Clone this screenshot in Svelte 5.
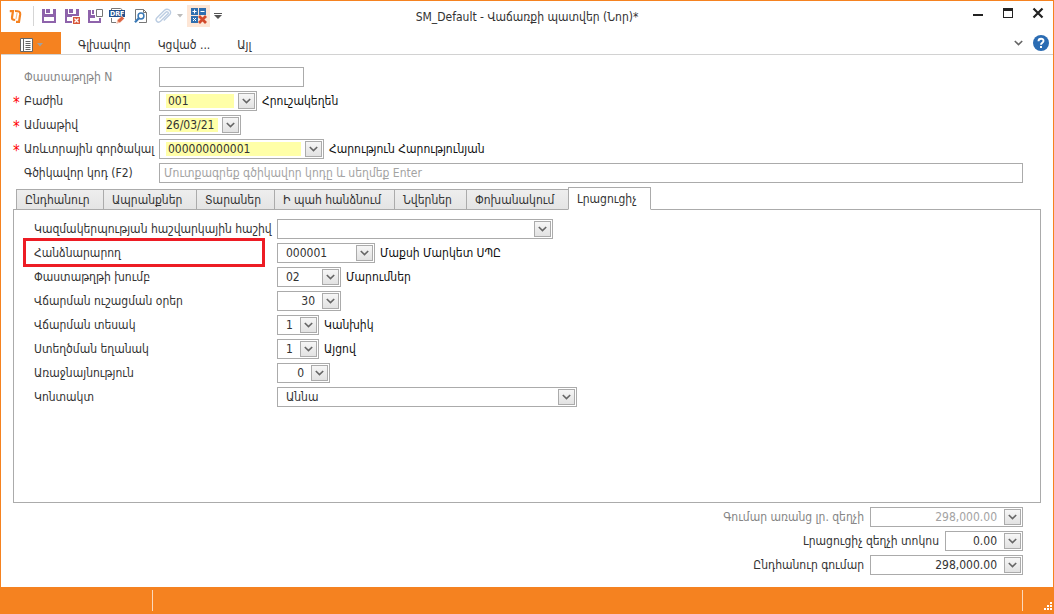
<script>
    let activeTab = $state(6);

    const tabs = [
        { title: 'Ընդհանուր', width: 88 },
        { title: 'Ապրանքներ', width: 94 },
        { title: 'Տարաներ', width: 79 },
        { title: 'Ի պահ հանձնում', width: 121 },
        { title: 'Նվերներ', width: 73 },
        { title: 'Փոխանակում', width: 103 },
        { title: 'Լրացուցիչ', width: 83 }
    ];

    // Fields of the document header
    const headerFields = [
        { id: 'docnum', label: 'Փաստաթղթի N', kind: 'text', value: '', width: 145, muted: true },
        { id: 'branch', label: 'Բաժին', kind: 'list', value: '001', width: 98, required: true, note: 'Հրուշակեղեն' },
        { id: 'date', label: 'Ամսաթիվ', kind: 'edit', value: '26/03/21', width: 82, required: true, tight: true },
        { id: 'agent', label: 'Առևտրային գործակալ', kind: 'list', value: '000000000001', width: 165, required: true, note: 'Հարություն Հարությունյան' },
        { id: 'barcode', label: 'Գծիկավոր կոդ (F2)', kind: 'text', value: '', placeholder: 'Մուտքագրեք գծիկավոր կոդը և սեղմեք Enter' }
    ];

    // Fields of the last tab
    const extraFields = [
        { id: 'account', label: 'Կազմակերպության հաշվարկային հաշիվ', kind: 'list', value: '', width: 276 },
        { id: 'client', label: 'Հանձնարարող', kind: 'list', value: '000001', width: 98, note: 'Մաքսի Մարկետ ՍՊԸ', marked: true },
        { id: 'group', label: 'Փաստաթղթի խումբ', kind: 'list', value: '02', width: 64, note: 'Մարումներ' },
        { id: 'delay', label: 'Վճարման ուշացման օրեր', kind: 'edit', value: '30', width: 64, right: true },
        { id: 'paytype', label: 'Վճարման տեսակ', kind: 'list', value: '1', width: 42, note: 'Կանխիկ' },
        { id: 'source', label: 'Ստեղծման եղանակ', kind: 'list', value: '1', width: 42, note: 'Այցով' },
        { id: 'priority', label: 'Առաջնայնություն', kind: 'edit', value: '0', width: 53, right: true },
        { id: 'contact', label: 'Կոնտակտ', kind: 'list', value: 'Աննա', width: 300 }
    ];

    const totals = [
        { id: 'net', label: 'Գումար առանց լր. զեղչի', kind: 'edit', value: '298,000.00', width: 153, right: true, muted: true },
        { id: 'discount', label: 'Լրացուցիչ զեղչի տոկոս', kind: 'edit', value: '0.00', width: 78, right: true },
        { id: 'total', label: 'Ընդհանուր գումար', kind: 'edit', value: '298,000.00', width: 153, right: true }
    ];
</script>

{#snippet chevron()}
    <svg width="9" height="6" viewBox="0 0 9 6"><path d="M.8 1l3.700 3.600L8.200 1" fill="none" stroke="#666" stroke-width="1.600" /></svg>
{/snippet}

{#snippet floppy()}
    <path d="M1 1h14v14H1z" fill="#8e63ab" />
    <path d="M4 1h8v5H4z" fill="#fff" />
    <path d="M5 1h4v4H5z" fill="#8e63ab" />
    <path d="M3 9h10v4H3z" fill="#fff" />
{/snippet}

{#snippet field(f)}
    {#if f.kind === 'text'}
        <input
            class="box plain"
            class:wide={!f.width}
            id={f.id}
            type="text"
            value={f.value}
            placeholder={f.placeholder}
            style:width={f.width ? `${f.width}px` : null}
        />
    {:else}
        <span class="box combo" class:required={f.required} class:tight={f.tight} class:right={f.right} class:muted={f.muted} style:width="{f.width}px">
            {#if f.kind === 'list'}
                <select id={f.id}><option>{f.value}</option></select>
                <span class="drop">{@render chevron()}</span>
            {:else}
                <input id={f.id} type="text" value={f.value} />
                <button class="drop" type="button" aria-label={f.label}>{@render chevron()}</button>
            {/if}
        </span>
    {/if}
    {#if f.note}<span class="note">{f.note}</span>{/if}
{/snippet}

<div class="window">
    <header class="titlebar">
        <div class="quick">
            <svg class="logo" width="14" height="16" viewBox="0 0 14 16">
                <path d="M.8 3.200H4L3 9.500c-.2 1.800.8 2.300 3.200 2.500" fill="none" stroke="#f58220" stroke-width="2.200" />
                <path d="M6 3c3.800 0 5.500.6 5.200 3.200L10 13.800H7" fill="none" stroke="#f58220" stroke-width="2.200" />
                <path d="M8 5L7 11" stroke="#fbc08c" stroke-width="1.200" />
            </svg>
            <span class="divider"></span>
            <button class="tool" aria-label="Save">
                <svg width="16" height="16" viewBox="0 0 16 16">{@render floppy()}</svg>
            </button>
            <button class="tool" aria-label="Save and close">
                <svg width="16" height="16" viewBox="0 0 16 16">
                    {@render floppy()}
                    <path d="M8 8h8v8H8z" fill="#fff" />
                    <path d="M9 9h7v7H9z" fill="#d9583b" />
                    <path d="M10.500 10.500l4 4m0-4l-4 4" stroke="#fff" stroke-width="1.300" />
                </svg>
            </button>
            <button class="tool" aria-label="Save and new">
                <svg width="16" height="16" viewBox="0 0 16 16">
                    <path d="M1 2h13v13H1z" fill="#8e63ab" />
                    <path d="M4 2h6v5H4zM3 10h9v3H3z" fill="#fff" />
                    <path d="M5 2h2v4H5z" fill="#8e63ab" />
                    <path d="M8 0h8v10H8z" fill="#fff" />
                    <path d="M9.500 1.500h6v7h-6z" fill="#fff" stroke="#777" />
                </svg>
            </button>
            <button class="tool" aria-label="Draft">
                <svg width="17" height="16" viewBox="0 0 17 16">
                    <path d="M2.500 10v4.500H7M2.500 2V.5h9l2 1.500" fill="none" stroke="#777" />
                    <path d="M0 2h16v7H0z" fill="#1f4e8c" />
                    <text x="1" y="8" font-size="7" font-weight="bold" fill="#fff">DRF</text>
                    <path d="M7.500 15.500l.8-3.500 4.500-4 2.700 2.500-4.500 4.200z" fill="#dc6543" stroke="#fff" stroke-width=".5" />
                    <path d="M7.500 15.500l.8-3 2.300 2.300z" fill="#f3c3ae" />
                </svg>
            </button>
            <button class="tool" aria-label="Preview">
                <svg width="16" height="16" viewBox="0 0 16 16">
                    <path d="M2.500 12V1.500h8l3 3v10H6" fill="#fff" stroke="#777" />
                    <path d="M10.500 1.500v3h3" fill="none" stroke="#777" />
                    <circle cx="8" cy="8" r="2.900" fill="#fff" stroke="#3a78b5" stroke-width="1.500" />
                    <path d="M5.800 10.300L2 14.300" stroke="#3a78b5" stroke-width="2.200" />
                </svg>
            </button>
            <button class="tool" aria-label="Attach">
                <svg width="17" height="16" viewBox="0 0 17 16">
                    <path d="M4.500 10.500l6.300-6.300c1.400-1.400 3.300.5 2 1.900l-7.300 7.200C3 15.500-.5 12.500 2 9.800l7.500-7.500C12.500-.5 17.500 3 14.800 6.500l-6 6" fill="none" stroke="#bccde2" stroke-width="1.400" />
                </svg>
            </button>
            <svg class="caret" width="6" height="4" viewBox="0 0 6 4"><path d="M0 0h6L3 3.500z" fill="#bbb" /></svg>
            <button class="tool lit" aria-label="Recalculate">
                <svg width="17" height="17" viewBox="0 0 17 17">
                    <path d="M1 1h7v7H1zM9 1h7v7H9zM1 9h7v7H1z" fill="#2f6fb0" />
                    <path d="M2.500 4.500h4M4.500 2.500v4M10.500 4.500h4M3 11l3 3m0-3l-3 3" stroke="#fff" />
                    <path d="M9 9l7 7m0-7l-7 7" stroke="#d24a2b" stroke-width="2.800" />
                </svg>
            </button>
            <svg class="caret" width="8" height="6" viewBox="0 0 8 6"><path d="M0 0h8v1H0zM0 2h8L4 6z" fill="#555" /></svg>
        </div>
        <h1>SM_Default - Վաճառքի պատվեր (Նոր)*</h1>
        <div class="controls">
            <button aria-label="Minimize"><svg width="12" height="12" viewBox="0 0 12 12"><path d="M1 7h10v2H1z" fill="#222" /></svg></button>
            <button aria-label="Maximize"><svg width="12" height="12" viewBox="0 0 12 12"><path d="M1 1h10v10H1zM2 4v6h8V4z" fill="#222" fill-rule="evenodd" /></svg></button>
            <button aria-label="Close"><svg width="12" height="12" viewBox="0 0 12 12"><path d="M1.500 1.500l9 9m0-9l-9 9" stroke="#222" stroke-width="2.200" /></svg></button>
        </div>
    </header>

    <nav class="ribbon">
        <button class="file" aria-label="File">
            <svg width="13" height="14" viewBox="0 0 13 14">
                <path d="M.5.5h12v13H.5z" fill="#fff" stroke="#666" />
                <path d="M3.500 0v14M5.500 3.500h5M5.500 5.500h5M5.500 7.500h5M5.500 9.500h5M5.500 11.500h5" stroke="#666" />
            </svg>
            <svg width="6" height="4" viewBox="0 0 6 4"><path d="M0 0h6L3 3.500z" fill="#a0a0a0" /></svg>
        </button>
        <button class="menu">Գլխավոր</button>
        <button class="menu">Կցված ...</button>
        <button class="menu">Այլ</button>
        <div class="help">
            <button aria-label="Collapse">{@render chevron()}</button>
            <button aria-label="Help">
                <svg width="16" height="16" viewBox="0 0 16 16">
                    <circle cx="8" cy="8" r="8" fill="#2b6cb3" />
                    <path d="M5.500 6.200C5.500 2.800 10.700 3 10.500 6 10.400 7.700 8 7.800 8 9.700" fill="none" stroke="#fff" stroke-width="1.900" />
                    <path d="M7 11h2v2H7z" fill="#fff" />
                </svg>
            </button>
        </div>
    </nav>

    <main>
        <div class="rows head">
            {#each headerFields as f}
                <div class="row">
                    <span class="star">{f.required ? '*' : ''}</span>
                    <label for={f.id} class:muted={f.muted}>{f.label}</label>
                    {@render field(f)}
                </div>
            {/each}
        </div>

        <div class="tabs" role="tablist">
            {#each tabs as tab, i}
                <button
                    class="tab"
                    class:active={activeTab === i}
                    role="tab"
                    aria-selected={activeTab === i}
                    style:width="{tab.width}px"
                    onclick={() => (activeTab = i)}>{tab.title}</button>
            {/each}
        </div>

        <section class="panel">
            {#if activeTab === 6}
                <div class="rows">
                    {#each extraFields as f}
                        <div class="row" class:marked={f.marked}>
                            <label for={f.id}>{f.label}</label>
                            {@render field(f)}
                        </div>
                    {/each}
                </div>
            {/if}
        </section>

        <div class="rows totals">
            {#each totals as f}
                <div class="row">
                    <label for={f.id} class:muted={f.muted}>{f.label}</label>
                    {@render field(f)}
                </div>
            {/each}
        </div>
    </main>

    <footer class="status">
        <span class="line"></span>
        <span class="line"></span>
        <svg width="9" height="9" viewBox="0 0 9 9">
            <path d="M6 0h2v2H6zM3 3h2v2H3zM6 3h2v2H6zM0 6h2v2H0zM3 6h2v2H3zM6 6h2v2H6z" fill="#fff" />
        </svg>
    </footer>
</div>

<style>
    :global(body) {
        margin: 0;
        background: #fff;
    }

    .window {
        display: flex;
        flex-direction: column;
        min-height: 100vh;
        box-sizing: border-box;
        border: 1px solid #f58220;
        border-bottom: none;
        font-family: 'DejaVu Sans Condensed', 'DejaVu Sans', sans-serif;
        font-size: 12px;
        line-height: 20px;
        color: #333;
    }

    button,
    input,
    select {
        margin: 0;
        padding: 0;
        border: none;
        border-radius: 0;
        background: none;
        font: inherit;
        color: inherit;
        box-sizing: border-box;
    }

    button {
        display: flex;
        align-items: center;
        justify-content: center;
    }

    /* Title bar */
    .titlebar {
        display: grid;
        grid-template-columns: 1fr auto 1fr;
        height: 31px;
        align-items: center;
    }

    .quick {
        display: flex;
        align-items: center;
        padding: 0 0 2px 8px;
    }

    .divider {
        width: 1px;
        height: 20px;
        margin: 0 3px 0 10px;
        background: #d5d5d5;
    }

    .tool {
        width: 23px;
        height: 22px;
    }

    .caret {
        margin: 0 4px 0 2px;
    }

    .lit {
        background: #fde6d6;
    }

    .lit + .caret {
        margin-left: 4px;
    }

    h1 {
        margin: 0;
        font-size: 12px;
        font-weight: normal;
    }

    .controls {
        display: flex;
        justify-content: flex-end;
        gap: 18px;
        padding: 0 9px 8px 0;
    }

    /* Menu row */
    .ribbon {
        display: flex;
        height: 22px;
        border-bottom: 1px solid #d2d2d2;
    }

    .file {
        width: 60px;
        gap: 4px;
        padding-top: 3px;
        background: #f58220;
    }

    .menu {
        padding: 4px 0 0 17px;
        margin-right: 10px;
    }

    .help {
        display: flex;
        align-items: center;
        gap: 10px;
        margin-left: auto;
        padding-right: 4px;
    }

    /* Form rows */
    main {
        display: flex;
        flex-direction: column;
        flex: 1;
        padding: 12px;
    }

    .rows {
        display: flex;
        flex-direction: column;
        gap: 4px;
    }

    .row {
        display: flex;
        height: 20px;
    }

    .row label {
        flex: none;
        white-space: nowrap;
    }

    .head {
        padding-right: 18px;
    }

    .head label {
        width: 135px;
    }

    .star {
        width: 11px;
        color: #f00;
        font-size: 15px;
        line-height: 24px;
    }

    .muted {
        color: #858585;
    }

    .box {
        flex: none;
        box-sizing: border-box;
        height: 20px;
        border: 1px solid #ababab;
    }

    .plain {
        padding: 0 4px;
    }

    .wide {
        flex: 1;
        min-width: 0;
    }

    .plain::placeholder {
        color: #a3a3a3;
        opacity: 1;
    }

    .combo {
        display: block;
        position: relative;
    }

    .combo select,
    .combo input {
        display: block;
        width: 100%;
        height: 18px;
        padding: 2px 22px 2px 8px;
        appearance: none;
        background-clip: content-box;
        line-height: 14px;
    }

    .combo.right input {
        padding-right: 25px;
        text-align: right;
    }

    .combo.muted input {
        color: #a3a3a3;
    }

    .combo.required select,
    .combo.required input {
        padding-left: 6px;
        text-indent: 2px;
        background-color: #ffffa8;
    }

    .combo.tight input {
        text-indent: 0;
    }

    .drop {
        display: flex;
        align-items: center;
        justify-content: center;
        position: absolute;
        top: 1px;
        right: 1px;
        box-sizing: border-box;
        width: 17px;
        height: 16px;
        border: 1px solid #ababab;
        background: linear-gradient(#f6f6f6, #e2e2e2);
    }

    span.drop {
        pointer-events: none;
    }

    .note {
        padding-left: 5px;
        color: #111;
        white-space: nowrap;
    }

    /* Tabs */
    .tabs {
        display: flex;
        align-items: flex-end;
        padding-left: 3px;
        margin: 4px 0 -1px;
        z-index: 1;
    }

    .tab {
        justify-content: flex-start;
        height: 21px;
        margin-right: -1px;
        padding-left: 8px;
        border: 1px solid #ababab;
        background: linear-gradient(#eee, #e4e4e4);
        white-space: nowrap;
    }

    .tab.active {
        height: 23px;
        border-bottom-color: #fff;
        background: #fff;
    }

    .panel {
        flex: 1;
        padding: 9px 20px;
        border: 1px solid #ababab;
    }

    .panel label {
        width: 243px;
    }

    .marked label {
        position: relative;
    }

    /* Red frame round the highlighted row title */
    .marked label::before {
        content: '';
        position: absolute;
        inset: -5px 12px -4px -11px;
        border: 3px solid #ed1c24;
    }

    .totals {
        align-items: flex-end;
        padding: 4px 18px 0 0;
    }

    .totals .row {
        gap: 6px;
    }

    /* Status bar */
    .status {
        display: flex;
        align-items: flex-end;
        height: 27px;
        box-sizing: border-box;
        padding: 3px 0 3px 151px;
        background: #f58220;
    }

    .line {
        width: 1px;
        height: 21px;
        background: #fbd9bd;
    }

    .line + .line {
        margin: 0 21px 0 auto;
    }
</style>
